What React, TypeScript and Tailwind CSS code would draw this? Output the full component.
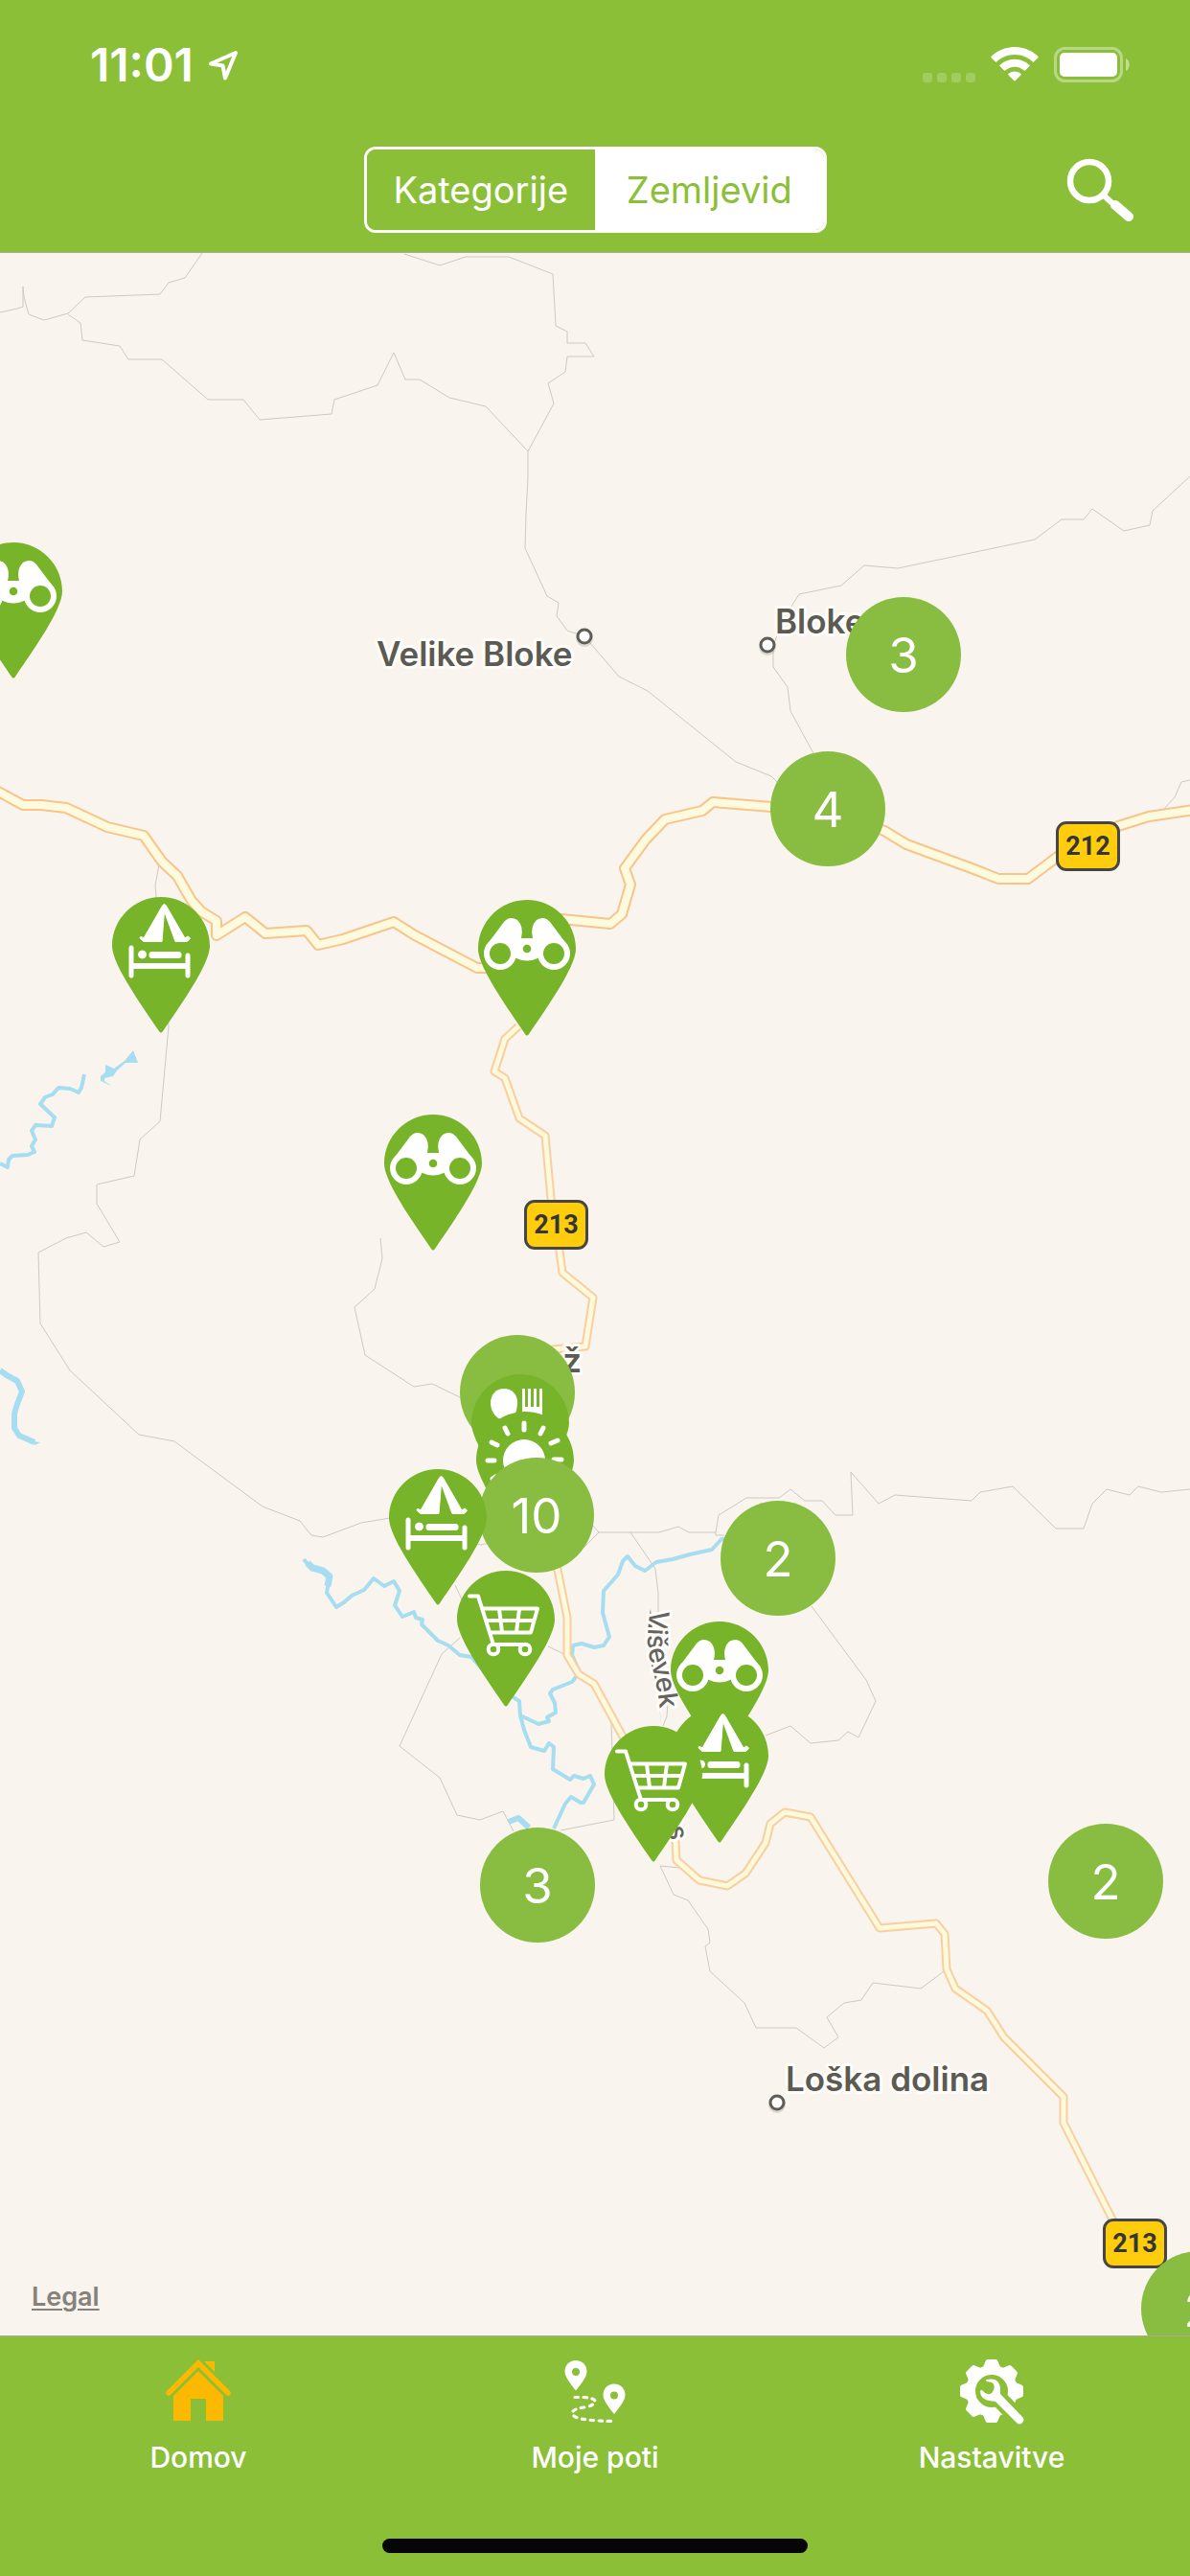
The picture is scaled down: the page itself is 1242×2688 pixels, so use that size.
import { useState } from "react";
import type { ReactNode } from "react";

type PinKind = "binoculars" | "camp" | "cart" | "food" | "sun";

type Marker =
  | { type: "pin"; kind: PinKind; label: string; x: number; y: number }
  | { type: "cluster"; count: string; x: number; y: number };

/* Marker positions are the top-left corner on the map canvas, in painting order. */
const markers: Marker[] = [
  { type: "pin", kind: "binoculars", label: "Razgledišče", x: -37, y: 302 },
  { type: "cluster", count: "3", x: 883, y: 359 },
  { type: "cluster", count: "4", x: 804, y: 520 },
  { type: "pin", kind: "camp", label: "Prenočišče", x: 117, y: 672 },
  { type: "pin", kind: "binoculars", label: "Razgledišče", x: 499, y: 675 },
  { type: "pin", kind: "binoculars", label: "Razgledišče", x: 401, y: 899 },
  { type: "cluster", count: "", x: 480, y: 1129 },
  { type: "pin", kind: "food", label: "Gostilna", x: 492, y: 1170 },
  { type: "pin", kind: "sun", label: "Narava", x: 497, y: 1209 },
  { type: "cluster", count: "10", x: 500, y: 1257 },
  { type: "pin", kind: "camp", label: "Prenočišče", x: 406, y: 1269 },
  { type: "pin", kind: "cart", label: "Trgovina", x: 477, y: 1375 },
  { type: "cluster", count: "2", x: 752, y: 1302 },
  { type: "pin", kind: "binoculars", label: "Razgledišče", x: 700, y: 1428 },
  { type: "pin", kind: "camp", label: "Prenočišče", x: 700, y: 1517 },
  { type: "pin", kind: "cart", label: "Trgovina", x: 631, y: 1537 },
  { type: "cluster", count: "3", x: 501, y: 1643 },
  { type: "cluster", count: "2", x: 1094, y: 1639 },
  { type: "cluster", count: "2", x: 1191, y: 2085 },
];

const shields = [
  { road: "212", x: 1102, y: 593 },
  { road: "213", x: 547, y: 988 },
  { road: "213", x: 1151, y: 2051 },
];

const localRoads = [
  "211,264 193,290 176,295 167,307 89,310 71,327 46,334 30,328 25,310 24,299 24,320 18,322 0,326",
  "71,328 84,337 86,355 125,361 134,375 169,375 217,417 254,417 271,438 346,432 349,417 394,402 411,368 423,396 438,396 469,415 507,424 551,471",
  "422,265 459,277 486,268 531,268 577,286 580,340 592,346 592,358 611,358 620,372 592,372 590,388 572,400 578,421 551,471 551,499 549,535 548,572 571,622 583,629 581,643 592,658 610,664 646,706 676,721 768,795 805,810 811,816",
  "849,786 825,742 822,717 807,696 807,674 817,647 834,620 878,611 902,590 937,593 1080,563 1108,542 1131,542 1140,531 1173,554 1200,548 1203,533 1242,497",
  "1242,814 1233,816 1226,832 1214,845",
  "166,902 162,924 163,937 176,1071 167,1170 146,1189 140,1227 101,1236 101,1256 125,1296 108,1301 90,1286 69,1292 40,1307 42,1381 73,1430 145,1497 182,1504 274,1572 313,1587 325,1602 337,1604 377,1589 407,1584 502,1612 510,1610",
  "397,1292 399,1313 391,1345 370,1364 381,1414 432,1447 451,1444 480,1458",
  "618,1591 625,1599 610,1614",
  "625,1599 688,1599 708,1593 719,1599 747,1599 747,1602 756,1602",
  "747,1599 750,1581 779,1563 813,1563 825,1554 840,1566 858,1566 872,1581 890,1581 888,1536 917,1569 934,1560 1014,1566 1023,1557 1057,1551 1102,1595 1131,1595 1140,1569 1155,1554 1179,1560 1188,1551 1212,1557 1242,1554",
  "658,1599 684,1637 687,1663 687,1699 690,1740 697,1776 696,1791 692,1801",
  "475,1654 482,1669",
  "480,1709 461,1726 417,1822 459,1855 477,1894 501,1899 525,1890 536,1911",
  "572,1718 589,1726",
  "585,1910 641,1899 638,1797",
  "847,1676 904,1753 914,1775 896,1813 885,1807 875,1816 846,1819 825,1801 799,1811",
  "709,1949 689,1947 703,1977 718,1983 739,2013 741,2027 736,2031 741,2057 777,2090 789,2116 831,2116 860,2137 875,2126 863,2105 881,2090 899,2087 911,2069 961,2075 985,2057",
];

const road212 =
  "-4,825 0,827 24,840 43,840 69,843 112,863 150,872 169,899 185,914 200,940 210,951 226,961 226,976 256,957 277,974 320,971 332,986 358,980 411,962 433,976 498,1010 512,1010 550,985 586,959 637,964 649,954 658,923 652,906 674,876 694,855 733,846 744,837 805,842 864,844 923,867 946,881 1014,906 1042,917 1073,917 1105,893 1135,878 1167,862 1199,852 1246,845";

const road213 = [
  "541,1071 527,1084 516,1118 527,1125 542,1167 569,1185 575,1250 584,1305 587,1328 619,1354 611,1405 577,1408 550,1440",
  "570,1600 582,1638 592,1688 592,1727 604,1747 620,1757 650,1812 690,1880 705,1921 706,1941 730,1962 759,1968 778,1955 799,1923 804,1903 819,1891 846,1896 918,2012 977,2007 986,2018 988,2055 997,2075 1030,2098 1048,2126 1110,2188 1110,2215 1161,2316 1180,2341",
];

const rivers = [
  "88,1121 85,1135 82,1140 73,1136 61,1135 55,1142 47,1145 42,1152 57,1166 54,1175 37,1174 33,1180 37,1189 33,1196 36,1202 29,1205 13,1206 9,1210 8,1218 0,1214",
  "317,1627 325,1637 337,1639 344,1645 341,1662 351,1677 359,1672 367,1665 380,1659 390,1647 401,1655 411,1650 417,1660 412,1675 420,1687 432,1682 434,1688 441,1690 440,1695 457,1712 468,1717 480,1727 492,1729 515,1755 537,1772 542,1775 543,1790 547,1805 554,1823 568,1827 573,1819 578,1823 577,1846 595,1857 599,1853 609,1856 616,1853 620,1862 609,1881 606,1881 596,1875 590,1882 578,1908",
  "543,1790 562,1799 573,1796 571,1792 580,1787 579,1777 574,1767 577,1763 597,1755 605,1745 597,1727 598,1717 607,1715 620,1719 630,1717 636,1708 629,1683 630,1660 645,1643 650,1629 655,1624 663,1634 673,1639 685,1630 702,1627 720,1622 743,1617 753,1606 760,1607",
];

const towns = [
  { x: 610, y: 664 },
  { x: 801, y: 673 },
  { x: 811, y: 2194 },
];

function BaseMap() {
  return (
    <svg
      className="absolute left-0 top-0 h-[2174px] w-[1242px] max-w-none"
      viewBox="0 264 1242 2174"
      fill="none"
      aria-hidden="true"
    >
      <g stroke="#cdcac3" strokeWidth="1">
        {localRoads.map((points) => (
          <polyline key={points} points={points} />
        ))}
      </g>
      <g stroke="#a6ddf0" strokeWidth="4" strokeLinejoin="round">
        {rivers.map((points) => (
          <polyline key={points} points={points} />
        ))}
        <polyline
          strokeWidth="6"
          points="0,1430 7,1435 18,1441 23,1452 18,1465 15,1475 15,1490 20,1498 36,1505"
        />
        <polyline strokeWidth="6" points="531,1901 541,1897 552,1907" />
        <polyline strokeWidth="7" points="321,1631 326,1636 337,1639 344,1645 342,1655" />
      </g>
      <path
        fill="#a6ddf0"
        d="M139 1096L144 1109L131 1109L122 1117L118 1123L109 1125L109 1128L116 1133L105 1128V1123L110 1119V1111L119 1115L130 1107ZM35 1504L42 1505L36 1508Z"
      />
      <g strokeLinejoin="round">
        {road213.map((points) => (
          <polyline key={points} points={points} stroke="#f7cfa0" strokeWidth="9" />
        ))}
        {road213.map((points) => (
          <polyline key={points} points={points} stroke="#fdf9da" strokeWidth="5" />
        ))}
        <polyline points={road212} stroke="#f7c48c" strokeWidth="12" />
        <polyline points={road212} stroke="#fdfade" strokeWidth="8" />
      </g>
      {towns.map((t) => (
        <g key={t.x}>
          <circle cx={t.x} cy={t.y + 2} r="9" fill="#000000" opacity=".12" />
          <circle cx={t.x} cy={t.y} r="7" fill="#ffffff" stroke="#5f5d56" strokeWidth="3" />
        </g>
      ))}
      <g
        className="font-['Inter',sans-serif] text-[35px] font-semibold"
        fill="#5b5a53"
        stroke="#fffdfa"
        strokeWidth="6"
        strokeLinejoin="round"
        paintOrder="stroke"
      >
        <text x="393" y="695">Velike Bloke</text>
        <text x="809" y="661">Bloke</text>
        <text x="820" y="2182">Loška dolina</text>
        <text x="607" y="1432" textAnchor="end">Lož</text>
        <g className="text-[28px] font-medium" fill="#65645f">
          <path id="visevek" stroke="none" d="M679 1679C675 1702 675 1720 679 1734C683 1748 687 1760 690 1800" />
          <text>
            <textPath href="#visevek">Viševek</textPath>
          </text>
          <text transform="translate(699 1921) rotate(82)" textAnchor="end">Iga vas</text>
        </g>
      </g>
    </svg>
  );
}

const glyphs: Record<PinKind, ReactNode> = {
  binoculars: (
    <>
      <path
        fill="#fff"
        d="M9 47L27 23Q33 16 41 21Q48 28 45 40H57Q54 28 61 21Q69 16 75 23L93 47L62 61Q51 66 40 61Z"
      />
      <circle cx="23" cy="56" r="17" fill="#fff" />
      <circle cx="79" cy="56" r="17" fill="#fff" />
      <circle cx="23" cy="56" r="11" />
      <circle cx="79" cy="56" r="11" />
      <circle cx="51" cy="51" r="4.3" />
    </>
  ),
  camp: (
    <g fill="#fff" stroke="#fff" strokeWidth="1" strokeLinejoin="round">
      <path d="M52 10Q54.500 5 57 10L76 43L79 41Q83 43 80 45L78 46.500H66L54.500 15L52 46.500H33L29 43Q29 40 33 43Z" />
      <rect x="18" y="51" width="4" height="33" rx="1.500" />
      <rect x="77" y="59" width="4" height="25" rx="1.500" />
      <rect x="20" y="69.500" width="59" height="5" />
      <circle cx="31.500" cy="60" r="4" />
      <rect x="39" y="57.500" width="33" height="6" rx="2" />
    </g>
  ),
  cart: (
    <g fill="none" stroke="#fff" strokeWidth="4" strokeLinejoin="round" strokeLinecap="round">
      <path d="M13 26.500H22L38 77H71" />
      <path d="M27 39.500H84L77 64.500H35M31 52H80M44 40L47 64M65 40L62 64" />
      <circle cx="38" cy="82" r="5.300" />
      <circle cx="71" cy="82" r="5.300" />
    </g>
  ),
  food: (
    <g fill="#fff">
      <path d="M34 15C42 15 48 21 48 29C48 34 47 38 46 41L30 47C24 44 20 37 20 30C20 21 26 15 34 15Z" />
      <path d="M53 15H56V34H59V15H62V34H65V15H68V34H71V15H74V43H53Z" />
    </g>
  ),
  sun: (
    <g fill="#fff" stroke="#fff" strokeWidth="5" strokeLinecap="round">
      <circle cx="50" cy="51" r="22" stroke="none" />
      <path d="M50 12V19M30 17L33 23M70 17L67 23M16 32L22 35M85 30L78 33M12 51H19M81 50H89M17 70L20 68" />
    </g>
  ),
};

function Pin({ kind }: { kind: PinKind }) {
  return (
    <svg viewBox="0 0 102 142" className="h-[142px] w-[102px]" fill="#78b42a" aria-hidden="true">
      <path d="M51 0C79 0 102 23 102 51C102 70 72 112 53 140Q51 143 49 140C30 112 0 70 0 51C0 23 23 0 51 0Z" />
      {glyphs[kind]}
    </svg>
  );
}

function StatusBar() {
  return (
    <div className="flex h-[132px] items-start justify-between pl-[94px] pr-[62px]">
      <div className="flex items-center gap-[14px] pt-[40px]">
        <span className="text-[48px] font-semibold leading-[56px]">11:01</span>
        <svg viewBox="0 0 34 34" className="size-[34px]" aria-hidden="true">
          <path
            d="M30 4L4 15.500L16.500 17.500L19 30.500Z"
            fill="none"
            stroke="#fff"
            strokeWidth="4"
            strokeLinejoin="round"
          />
        </svg>
      </div>
      <div className="flex items-end gap-4 pt-[49px]">
        <div className="flex gap-[5px] opacity-20">
          {[0, 1, 2, 3].map((n) => (
            <span key={n} className="size-[10px] rounded-[3px] bg-white" />
          ))}
        </div>
        <svg viewBox="0 0 50 37" className="h-[37px] w-[50px]" fill="#fff" aria-hidden="true">
          <path d="M25 0C34.500 0 43 3.700 49.500 10Q50 10.600 49.500 11.200L45 15.600Q44.400 16.100 43.800 15.500C38.600 10.700 32.200 8 25 8S11.400 10.700 6.200 15.500Q5.600 16.100 5 15.600L.5 11.200Q0 10.600 .5 10C7 3.700 15.500 0 25 0Z" />
          <path d="M25 12.700C31 12.700 36.300 15 40.500 18.900Q41 19.500 40.500 20.100L36 24.500Q35.400 25 34.800 24.500C32.100 22 28.800 20.700 25 20.700S17.900 22 15.200 24.500Q14.600 25 14 24.500L9.500 20.100Q9 19.500 9.500 18.900C13.700 15 19 12.700 25 12.700Z" />
          <path d="M25 25.500C27.600 25.500 29.800 26.400 31.600 28Q32.100 28.600 31.600 29.200L25.600 35.200Q25 35.800 24.400 35.200L18.400 29.200Q17.900 28.600 18.400 28C20.200 26.400 22.400 25.500 25 25.500Z" />
        </svg>
        <svg viewBox="0 0 80 37" className="h-[37px] w-[80px]" aria-hidden="true">
          <rect x="1.500" y="1.500" width="69" height="34" rx="10" fill="none" stroke="#fff" strokeWidth="3" opacity=".4" />
          <rect x="6" y="6" width="60" height="25" rx="5" fill="#fff" />
          <path d="M75 12C80 14 80 23 75 25Z" fill="#fff" opacity=".45" />
        </svg>
      </div>
    </div>
  );
}

function HomeIcon() {
  return (
    <svg viewBox="0 0 68 66" className="h-[66px] w-[68px]" fill="#fcb900" aria-hidden="true">
      <path d="M3 35L34 4L65 35" fill="none" stroke="#fcb900" strokeWidth="5.500" strokeLinecap="round" />
      <path d="M40 2H51V13Z" />
      <path d="M34 12L60 38V64H42V41H26V64H8V38Z" />
    </svg>
  );
}

function RoutesIcon() {
  return (
    <svg viewBox="0 0 66 66" className="size-[66px]" fill="#fff" aria-hidden="true">
      <path
        fillRule="evenodd"
        d="M13 1C19.600 1 24.500 6 24.500 12.500C24.500 18 19 25 13 32.500C7 25 1.500 18 1.500 12.500C1.500 6 6.400 1 13 1ZM13 9A4 4 0 1 0 13 17A4 4 0 1 0 13 9Z"
      />
      <path
        fillRule="evenodd"
        d="M53 25.500C59.600 25.500 64.500 30.500 64.500 37C64.500 42.500 59 49.500 53 57C47 49.500 41.500 42.500 41.500 37C41.500 30.500 46.400 25.500 53 25.500ZM53 33.500A4 4 0 1 0 53 41.500A4 4 0 1 0 53 33.500Z"
      />
      <path
        d="M12 39.500H22Q34 40.500 33 44.500Q31 48.500 22 50Q9 51.500 9.500 56.500Q10 61.500 26 63Q38 64.500 55 64.500"
        fill="none"
        stroke="#fff"
        strokeWidth="3.200"
        strokeLinecap="round"
        strokeDasharray="3.500 5.500"
      />
    </svg>
  );
}

function SettingsIcon() {
  return (
    <svg viewBox="-34 -34 69 69" className="size-[69px]" fill="#fff" aria-hidden="true">
      <circle r="22" fill="none" stroke="#fff" strokeWidth="10" />
      {[0, 45, 90, 135, 180, 225, 270, 315].map((a) => (
        <path key={a} d="M-9 -25L-6.500 -31Q-6 -33 -4 -33H4Q6 -33 6.500 -31L9 -25Z" transform={`rotate(${a})`} />
      ))}
      <path d="M4 4L32 33" stroke="#8abf37" strokeWidth="18" />
      <path d="M-5.500 -12Q8 -15 9 -3V3L32 27Q35 30 32 33Q29 36 26 33L4 11L-3 10Q-12 8 -12 0Q-11 -2 -9 0Q-6 4 -2 3Q1 2 2 -1Q4 -7 0 -9L-5 -10Q-7 -11 -5.500 -12Z" />
    </svg>
  );
}

const tabs = [
  { label: "Domov", icon: <HomeIcon /> },
  { label: "Moje poti", icon: <RoutesIcon /> },
  { label: "Nastavitve", icon: <SettingsIcon /> },
];

export default function App() {
  const [view, setView] = useState("Zemljevid");

  return (
    <div className="flex min-h-screen flex-col bg-[#8abf37] font-['Inter',sans-serif] text-white">
      <header className="border-b border-[#a9a9a0]">
        <StatusBar />
        <div className="grid h-[131px] grid-cols-[1fr_auto_1fr] items-start pt-[21px]">
          <div />
          <div className="flex h-[90px] w-[483px] overflow-hidden rounded-xl border-3 border-white text-[38px]">
            {["Kategorije", "Zemljevid"].map((name) => (
              <button
                key={name}
                type="button"
                aria-pressed={view === name}
                onClick={() => setView(name)}
                className={
                  view === name
                    ? "flex-1 bg-white text-[#8abf37]"
                    : "flex-1 bg-[#8abf37] text-white"
                }
              >
                {name}
              </button>
            ))}
          </div>
          <button type="button" aria-label="Iskanje" className="mr-[57px] mt-[10px] justify-self-end">
            <svg viewBox="0 0 72 70" className="h-[70px] w-[72px]" fill="none" stroke="#fff" aria-hidden="true">
              <circle cx="24" cy="26" r="20" strokeWidth="6.500" />
              <path d="M38 40L50 51" strokeWidth="6" />
              <path d="M51 51L65 63" strokeWidth="10" strokeLinecap="round" />
            </svg>
          </button>
        </div>
      </header>

      <main className="relative flex-1 overflow-hidden bg-[#f9f4ed]">
        <BaseMap />
        {shields.map((s) => (
          <span
            key={s.y}
            className="absolute flex h-[52px] w-[67px] items-center justify-center rounded-[11px] border-3 border-[#464646] bg-[#ffcd0b] font-['Roboto',sans-serif] text-[27px] font-bold leading-none text-[#353535]"
            style={{ left: s.x, top: s.y }}
          >
            {s.road}
          </span>
        ))}
        {markers.map((m) => (
          <button
            key={`${m.x}-${m.y}`}
            type="button"
            className="absolute"
            style={{ left: m.x, top: m.y }}
            aria-label={m.type === "pin" ? m.label : `Skupina ${m.count}`}
          >
            {m.type === "pin" ? (
              <Pin kind={m.kind} />
            ) : (
              <span className="flex size-[120px] items-center justify-center rounded-full bg-[#89bd42] text-[51px] leading-none">
                {m.count}
              </span>
            )}
          </button>
        ))}
        <a
          href="#legal"
          className="absolute bottom-[22px] left-[33px] text-[27px] font-semibold leading-[36px] text-[#85827c] underline decoration-2 underline-offset-3"
        >
          Legal
        </a>
      </main>

      <footer className="flex h-[251px] flex-col items-center justify-between border-t border-[#a9a9a0] pb-6 pt-[22px]">
        <nav className="grid w-full grid-cols-3">
          {tabs.map((t) => (
            <a key={t.label} href="#tab" className="flex flex-col items-center gap-4 text-[30px] font-medium leading-[36px]">
              <span className="flex h-[70px] items-center">{t.icon}</span>
              {t.label}
            </a>
          ))}
        </nav>
        <div className="h-[15px] w-[444px] rounded-full bg-[#060606]" />
      </footer>
    </div>
  );
}
